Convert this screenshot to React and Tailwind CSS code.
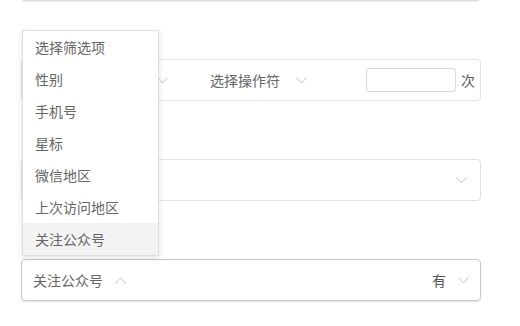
import React from "react";

const options = ["选择筛选项", "性别", "手机号", "星标", "微信地区", "上次访问地区", "关注公众号"];

function Chevron({ up = false }) {
  return (
    <svg width="11" height="7" viewBox="0 0 11 7" className="shrink-0">
      <polyline
        points={up ? "0.5,6.5 5.5,1 10.5,6.5" : "0.5,0.5 5.5,6 10.5,0.5"}
        fill="none"
        stroke="#c4c4c4"
        strokeWidth="1"
      />
    </svg>
  );
}

function Label({ children }) {
  return <div className="text-[14px] leading-[18px] text-[#666]">{children}</div>;
}

export default function App() {
  return (
    <div
      className="relative w-[520px] h-[326px] bg-white overflow-hidden"
      style={{ fontFamily: '"Noto Sans CJK SC", "Noto Sans", sans-serif' }}
    >
      <div className="px-[21px]">
        <div className="ml-[1px] w-[457px] h-[2px] -mt-px bg-[#dcdcdc] rounded-b-[2px] shadow-[0_1px_2px_rgba(0,0,0,0.08)]" />

        {/* row 1 */}
        <div className="mt-[30px]">
          <Label>：条件</Label>
        </div>
        <div className="mt-[10px] h-[42px] w-[460px] border border-[#e2e2e2] rounded-[4px] flex items-center text-[14px] text-[#666]">
          <div className="w-[146px] flex justify-end">
            <Chevron />
          </div>
          <div className="ml-[42px] flex items-center">
            <span>选择操作符</span>
            <span className="ml-[16px]"><Chevron /></span>
          </div>
          <div className="ml-auto flex items-center pr-[5px]">
            <div className="w-[90px] h-[24px] border border-[#d9d9d9] rounded-[3px]" />
            <span className="ml-[5px] text-[#555]">次</span>
          </div>
        </div>

        {/* row 2 */}
        <div className="mt-[30px]">
          <Label>：地区</Label>
        </div>
        <div className="mt-[10px] h-[42px] w-[460px] border border-[#e2e2e2] rounded-[4px] flex items-center justify-end pr-[13px]">
          <Chevron />
        </div>

        {/* row 3 */}
        <div className="mt-[30px]">
          <Label>：关注</Label>
        </div>
        <div className="mt-[10px] h-[42px] w-[460px] border border-[#c9c9c9] rounded-[4px] shadow-[0_1px_2px_rgba(0,0,0,0.12)] flex items-center text-[14px] text-[#666] pl-[11px] pr-[11px]">
          <span>关注公众号</span>
          <span className="ml-[12px]"><Chevron up /></span>
          <span className="ml-auto text-[#555]">有</span>
          <span className="ml-[12px]"><Chevron /></span>
        </div>
      </div>

      {/* dropdown menu */}
      <div className="absolute left-[22px] top-[30px] w-[137px] bg-white border border-[#dedede] shadow-[0_2px_6px_rgba(0,0,0,0.12)]">
        {options.map((o, i) => (
          <div
            key={o}
            className={`h-[32px] flex items-center pl-[12px] text-[14px] text-[#666] ${
              i === options.length - 1 ? "bg-[#f3f3f3]" : ""
            }`}
          >
            {o}
          </div>
        ))}
      </div>
    </div>
  );
}
